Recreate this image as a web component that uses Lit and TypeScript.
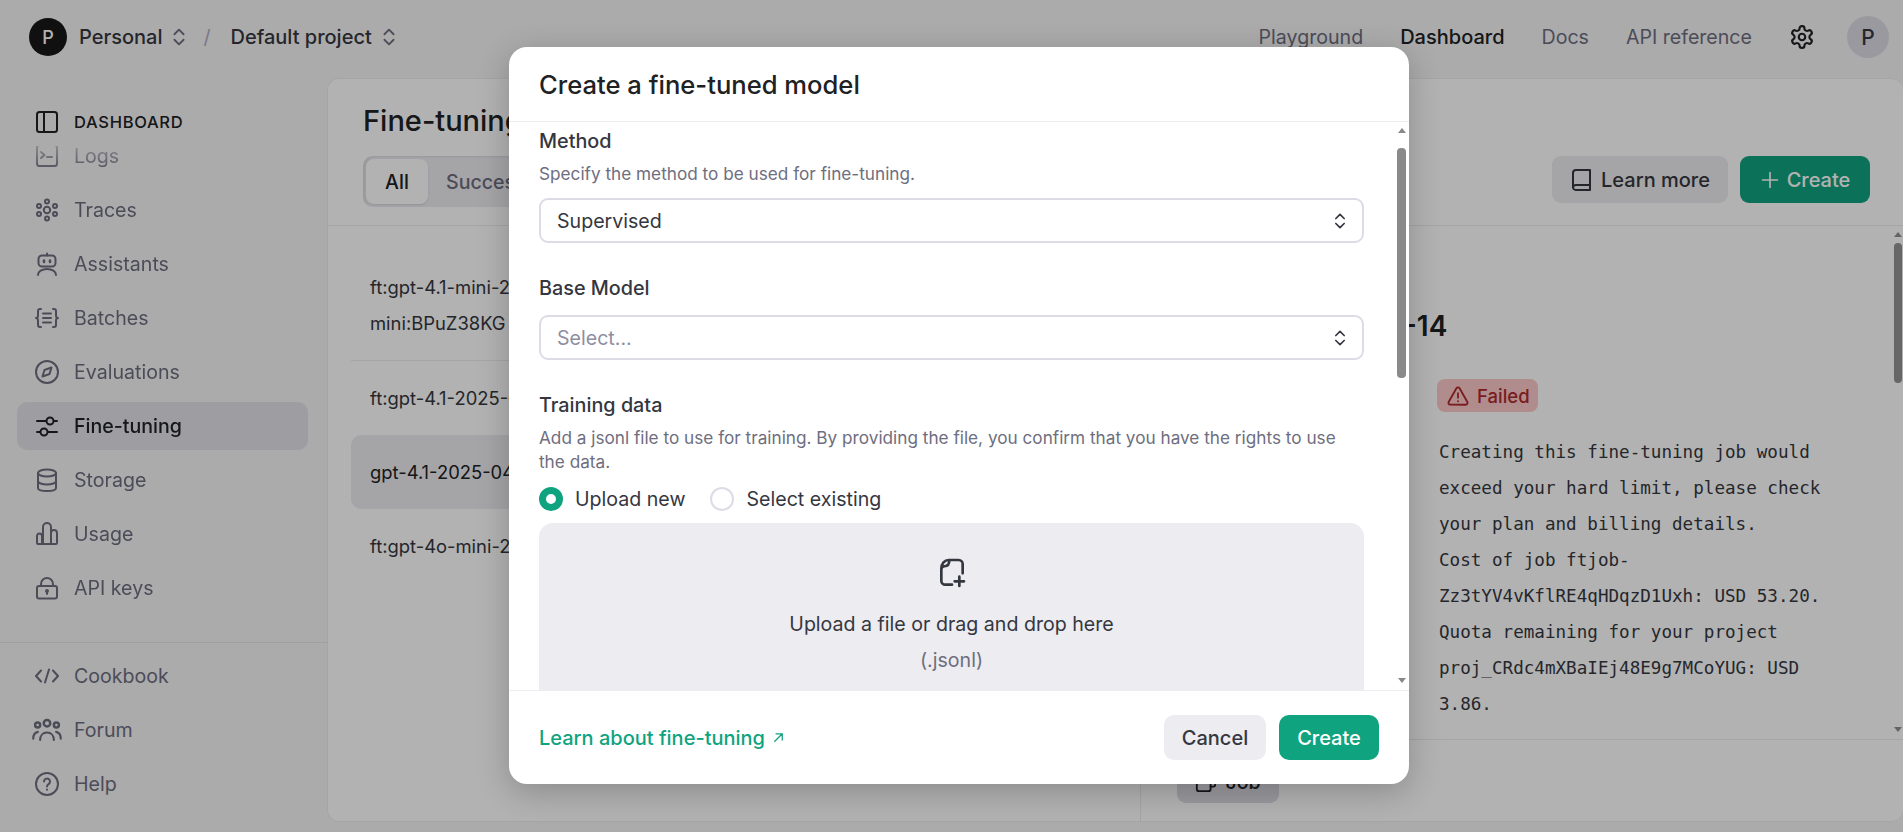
import { LitElement, html, css, svg } from "lit";
import { customElement } from "lit/decorators.js";

const ICONS: Record<string, any> = {
  panel: svg`<rect x="2" y="2" width="20" height="20" rx="2.500"/><path d="M9 2v20"/>`,
  logs: svg`<rect x="2" y="1" width="20" height="21" rx="2.500"/><path d="M6 8l3.500 3L6 14M12 13h5"/>`,
  traces: svg`<circle cx="12" cy="12" r="3.200"/><circle cx="12" cy="3.500" r="2"/><circle cx="12" cy="20.500" r="2"/><circle cx="4" cy="8" r="2"/><circle cx="20" cy="8" r="2"/><circle cx="4" cy="16" r="2"/><circle cx="20" cy="16" r="2"/>`,
  assist: svg`<rect x="3.500" y="3.500" width="17" height="11" rx="3.500"/><path d="M12 3.500V1.500M3 23c0-3.500 4-6 9-6s9 2.500 9 6"/><path d="M9 8.500v1.500M15 8.500v1.500" stroke-width="2.600"/>`,
  batch: svg`<path d="M6 3H5a2 2 0 0 0-2 2v4.500c0 1.500-1 2.500-2 2.500 1 0 2 1 2 2.500V19a2 2 0 0 0 2 2h1M18 3h1a2 2 0 0 1 2 2v4.500c0 1.500 1 2.500 2 2.500-1 0-2 1-2 2.500V19a2 2 0 0 1-2 2h-1M8 7.500h8M8 12h8M8 16.500h8"/>`,
  evals: svg`<circle cx="12" cy="12" r="11"/><path d="M16.500 7.500l-2 6.500-7 2.500 2-6.500z"/>`,
  tune: svg`<path d="M2 7h9M19 7h3M2 18h3M13 18h9"/><circle cx="15" cy="7" r="3.500"/><circle cx="9" cy="18" r="3.500"/>`,
  storage: svg`<ellipse cx="12" cy="5" rx="9" ry="3.500"/><path d="M3 5v15c0 2 4 3 9 3s9-1 9-3V5M3 13c0 2 4 3.500 9 3.500s9-1.500 9-3.500"/>`,
  usage: svg`<path d="M3 22a1 1 0 0 1-1-1v-7a2.500 2.500 0 0 1 5 0M8 22V5a3.500 3.500 0 0 1 8 0v17M3 22h18a1 1 0 0 0 1-1V11a3 3 0 0 0-6 0"/><path d="M7 14v8"/>`,
  lock: svg`<rect x="2" y="10" width="20" height="12.500" rx="2"/><path d="M6 10V8a6 6 0 0 1 12 0v2"/><circle cx="12" cy="15" r="1" fill="currentColor"/><path d="M12 15v3"/>`,
  code: svg`<path d="M6 6.500l-5 5.500 5 5.500M18 6.500l5 5.500-5 5.500M14 5.500l-4 13"/>`,
  forum: svg`<circle cx="12" cy="6.500" r="2.600"/><circle cx="4.500" cy="8" r="2"/><circle cx="19.500" cy="8" r="2"/><path d="M6.500 20c0-3.500 2.200-6 5.500-6s5.500 2.500 5.500 6M1 19c0-2.700 1.200-5 3.700-5.500M23 19c0-2.700-1.200-5-3.700-5.500" stroke-width="1.700"/>`,
  help: svg`<circle cx="12" cy="12" r="11"/><path d="M9 9.500a3 3 0 1 1 4.500 2.600c-1 .6-1.500 1.200-1.500 2.400"/><path d="M12 17.500v.3"/>`,
  gear: svg`<path d="M12.220 2h-.44a2 2 0 0 0-2 2v.18a2 2 0 0 1-1 1.730l-.43.25a2 2 0 0 1-2 0l-.15-.08a2 2 0 0 0-2.730.73l-.22.38a2 2 0 0 0 .73 2.730l.15.1a2 2 0 0 1 1 1.720v.51a2 2 0 0 1-1 1.740l-.15.09a2 2 0 0 0-.73 2.730l.22.38a2 2 0 0 0 2.730.73l.15-.08a2 2 0 0 1 2 0l.43.25a2 2 0 0 1 1 1.730V20a2 2 0 0 0 2 2h.44a2 2 0 0 0 2-2v-.18a2 2 0 0 1 1-1.730l.43-.25a2 2 0 0 1 2 0l.15.08a2 2 0 0 0 2.730-.73l.22-.39a2 2 0 0 0-.73-2.730l-.15-.08a2 2 0 0 1-1-1.740v-.5a2 2 0 0 1 1-1.740l.15-.09a2 2 0 0 0 .73-2.730l-.22-.38a2 2 0 0 0-2.730-.73l-.15.08a2 2 0 0 1-2 0l-.43-.25a2 2 0 0 1-1-1.730V4a2 2 0 0 0-2-2z"/><circle cx="12" cy="12" r="3"/>`,
  updown: svg`<path d="M7 9l5-5 5 5M7 15l5 5 5-5"/>`,
  book: svg`<path d="M20 17H6a3 3 0 0 0-3 3V5a3 3 0 0 1 3-3h14v20H6a3 3 0 0 1-3-2"/>`,
  plus: svg`<path d="M12 3v18M3 12h18"/>`,
  warn: svg`<path d="M10.300 3.500L1.800 18.500A2 2 0 0 0 3.500 21.500h17a2 2 0 0 0 1.700-3L13.700 3.500a2 2 0 0 0-3.400 0z"/><path d="M12 9v5M12 17.500v.2"/>`,
  file: svg`<path d="M12 21.500H7a3 3 0 0 1-3-3V9.500C4 5.500 6.500 3 9.500 3H17a3 3 0 0 1 3 3v7M4 10c0-1.500 1.200-2.300 2.500-2.300 2.500 0 3.500-2 3.500-4.700M17.500 15.500v7M14 19h7"/>`,
  ext: svg`<path d="M6 18L18 6M8 6h10v10"/>`,
  clone: svg`<rect x="2" y="6" width="15" height="16" rx="2.500"/><path d="M7 6V4a2 2 0 0 1 2-2h11a2 2 0 0 1 2 2v11a2 2 0 0 1-2 2h-3"/>`,
};

const icon = (name: string, cls = "") =>
  html`<svg class="ic ${cls}" viewBox="0 0 24 24" fill="none" stroke="currentColor" stroke-width="2" stroke-linecap="round" stroke-linejoin="round">${ICONS[name]}</svg>`;

const NAV: [string, string, boolean?][] = [
  ["logs", "Logs"],
  ["traces", "Traces"],
  ["assist", "Assistants"],
  ["batch", "Batches"],
  ["evals", "Evaluations"],
  ["tune", "Fine-tuning", true],
  ["storage", "Storage"],
  ["usage", "Usage"],
  ["lock", "API keys"],
];
const FOOT: [string, string][] = [
  ["code", "Cookbook"],
  ["forum", "Forum"],
  ["help", "Help"],
];

@customElement("app-root")
export class AppRoot extends LitElement {
  static styles = css`
    :host {
      display: block;
      position: relative;
      width: 1903px;
      height: 832px;
      overflow: hidden;
      font-family: Inter, "Liberation Sans", sans-serif;
      font-size: 19.6px;
      color: #202123;
      background: #f5f5f6;
    }
    * { box-sizing: border-box; }
    .ic { width: 24px; height: 24px; flex: none; display: block; }

    .page { display: grid; grid-template-rows: 78px 1fr; height: 832px; }
    .top { display: flex; align-items: center; padding: 0 14px 4px 29px; color: #353740; font-weight: 500; }
    .avatar { width: 38px; height: 38px; border-radius: 50%; background: #181818; color: #fff; display: flex; align-items: center; justify-content: center; font-size: 18px; margin-right: 12px; }
    .crumb { font-size: 20px; }
    .chev { width: 22px; height: 22px; color: #6e6e80; margin: 0 1px 0 6px; }
    .slash { color: #acacbe; margin: 0 20px 0 12px; font-weight: 400; }
    .topnav { margin-left: auto; display: flex; align-items: center; gap: 37px; color: #6e6e80; font-weight: 400; }
    .topnav .on { color: #202123; font-weight: 500; font-size: 20px; }
    .gear { width: 26px; height: 26px; color: #202123; margin-right: -5px; }
    .me { width: 42px; height: 42px; border-radius: 50%; background: #dcdce4; color: #353740; display: flex; align-items: center; justify-content: center; font-size: 21px; font-weight: 500; }

    .main { display: grid; grid-template-columns: 327px 1fr; min-height: 0; }
    .side { display: flex; flex-direction: column; min-height: 0; color: #6e6e80; }
    .side-title { display: flex; align-items: center; gap: 15px; height: 24px; margin: 32px 0 12px; padding-left: 35px; color: #202123; font-size: 16.5px; font-weight: 500; letter-spacing: 0.7px; }
    .nav { flex: 1; min-height: 0; overflow: hidden; padding: 0 19px 0 17px; -webkit-mask-image: linear-gradient(to bottom, rgba(0,0,0,0.35), #000 26px); mask-image: linear-gradient(to bottom, rgba(0,0,0,0.35), #000 26px); }
    .nav-inner { margin-top: -14px; display: flex; flex-direction: column; gap: 6px; }
    .item { display: flex; align-items: center; gap: 15px; height: 48px; padding-left: 18px; border-radius: 10px; }
    .item.on { background: #e2e2e9; color: #202123; font-weight: 500; }
    .foot { border-top: 1px solid #e3e3ea; padding: 9px 19px 24px 17px; display: flex; flex-direction: column; gap: 6px; }
    .ic-forum { width: 30px; height: 30px; margin: 0 -3px; }

    .card { background: #fff; border: 1px solid #ececf1; border-right: 0; border-radius: 12px; margin-bottom: 10px; display: flex; flex-direction: column; min-height: 0; overflow: hidden; }
    .card-head { display: flex; justify-content: space-between; align-items: flex-end; padding: 24px 33px 18px 35px; border-bottom: 1px solid #ececf1; height: 147px; flex: none; }
    .card-title { font-size: 29px; line-height: 36px; font-weight: 500; margin-bottom: 17px; }
    .tabs { display: inline-flex; height: 51px; padding: 3px; border-radius: 10px; background: #ececf1; box-shadow: inset 2px 1px 2px rgba(0,0,0,0.08); color: #6e6e80; font-weight: 500; width: 360px; }
    .tab { display: flex; align-items: center; justify-content: center; padding: 0 18px; border-radius: 8px; height: 45px; }
    .tab.on { background: #fff; color: #202123; box-shadow: 0 1px 2px rgba(0,0,0,0.1); width: 62px; padding: 0; }
    .actions { display: flex; gap: 12px; margin-bottom: 4px; }
    .btn { display: flex; align-items: center; justify-content: center; gap: 7px; height: 47px; border-radius: 9px; font-weight: 500; font-size: 20px; }
    .btn.soft { background: #ececf1; color: #353740; width: 176px; }
    .btn.green { background: #10a37f; color: #fff; width: 130px; }
    .btn .ic { width: 20px; height: 20px; }
    .btn.soft .ic { width: 24px; height: 24px; }

    .split { flex: 1; min-height: 0; display: grid; grid-template-columns: 813px 1fr; }
    .list { border-right: 1px solid #ececf1; padding: 24px 24px 0 23px; }
    .row { padding: 19px; line-height: 36px; font-size: 18.4px; color: #353740; white-space: nowrap; overflow: hidden; }
    .row.div { border-bottom: 1px solid #ececf1; }
    .row.sel { background: #ececf1; border-radius: 10px; color: #202123; height: 74px; }

    .detail { display: flex; flex-direction: column; min-height: 0; position: relative; }
    .scroll { flex: 1; min-height: 0; overflow: hidden; padding: 82px 0 0 36px; }
    .name { font-size: 28px; line-height: 36px; font-weight: 600; color: #202123; white-space: nowrap; }
    .status { margin: 35px 0 0 260px; }
    .badge { display: inline-flex; align-items: center; gap: 8px; height: 33px; width: 101px; padding-left: 10px; border-radius: 8px; background: #fdc9c9; color: #ae2a2d; font-weight: 500; font-size: 18.5px; }
    .badge .ic { width: 22px; height: 22px; }
    .mono { margin: 22px 0 0 262px; width: 400px; font-family: "DejaVu Sans Mono", "Liberation Mono", monospace; font-size: 17.6px; line-height: 36px; color: #353740; }
    .detail-foot { flex: none; height: 82px; border-top: 1px solid #ececf1; padding: 21px 0 0 36px; }
    .job { display: flex; align-items: center; justify-content: center; gap: 8px; width: 102px; height: 42px; border-radius: 9px; background: #dcdce4; color: #202123; font-weight: 500; }
    .job .ic { width: 22px; height: 22px; }

    .sb { position: absolute; }
    .thumb { position: absolute; border-radius: 4px; }
    .arrow { position: absolute; width: 0; height: 0; border-left: 4.500px solid transparent; border-right: 4.500px solid transparent; }
    .arrow.up { border-bottom: 5px solid var(--c); }
    .arrow.down { border-top: 5px solid var(--c); }
    .sb.page-sb { --c: #909090; top: 0; bottom: 82px; right: 0; width: 10px; }
    .sb.page-sb .thumb { background: #929292; left: 1px; width: 8px; top: 17px; height: 140px; }
    .sb.page-sb .arrow.up { top: 6px; left: 1px; }
    .sb.page-sb .arrow.down { bottom: 7px; left: 1px; }

    .overlay { position: absolute; inset: 0; background: rgba(0,0,0,0.3); }
    .modal { position: absolute; left: 509px; top: 47px; width: 900px; height: 737px; background: #fff; border-radius: 18px; display: flex; flex-direction: column; overflow: hidden; box-shadow: 0 8px 32px rgba(0,0,0,0.22); }
    .m-head { flex: none; height: 75px; display: flex; align-items: center; padding: 0 30px; border-bottom: 1px solid #ececf1; font-size: 25.6px; font-weight: 500; color: #202123; }
    .m-body { flex: 1; min-height: 0; overflow: hidden; position: relative; padding: 7px 45px 0 30px; }
    .sb.modal-sb { --c: #888; top: 0; bottom: 0; right: 0; width: 13px; }
    .sb.modal-sb .thumb { background: #8a8a8a; right: 3px; width: 9px; top: 26px; height: 230px; }
    .sb.modal-sb .arrow.up { top: 6px; right: 3px; }
    .sb.modal-sb .arrow.down { bottom: 7px; right: 3px; }
    .lab { font-size: 19.8px; line-height: 24px; font-weight: 500; color: #353740; }
    .help { font-size: 17.2px; line-height: 24px; color: #6e6e80; margin-top: 9px; }
    .sel-box { height: 45px; border: 2px solid #dcdce6; border-radius: 9px; display: flex; align-items: center; justify-content: space-between; padding: 0 12px 0 16px; color: #353740; }
    .sel-box .ic { width: 20px; height: 20px; color: #353740; }
    .sel-box.ph { color: #8e8ea0; }
    .sec { margin-top: 33px; }
    .gap-12 { margin-top: 12px; }
    .gap-15 { margin-top: 15px; }
    .radios { display: flex; align-items: center; height: 24px; margin-top: 13px; gap: 12px; color: #353740; }
    .radio { width: 24px; height: 24px; border-radius: 50%; border: 2px solid #dcdce6; flex: none; }
    .radio.on { border: 7px solid #10a37f; background: #fff; }
    .radio-2 { margin-left: 13px; }
    .upload { margin-top: 12px; height: 300px; border-radius: 14px; background: #ececf1; display: flex; flex-direction: column; align-items: center; padding-top: 33px; color: #353740; }
    .upload .ic { width: 32px; height: 32px; }
    .up-text { margin-top: 18px; line-height: 36px; }
    .up-sub { color: #6e6e80; line-height: 36px; }
    .m-foot { flex: none; height: 94px; border-top: 1px solid #ececf1; display: flex; align-items: center; justify-content: space-between; padding: 0 30px; }
    .learn { display: flex; align-items: center; gap: 6px; color: #10a37f; font-weight: 500; font-size: 20px; }
    .learn .ic { width: 15px; height: 15px; }
    .m-btns { display: flex; gap: 13px; }
    .m-btn { height: 45px; display: flex; align-items: center; justify-content: center; border-radius: 10px; font-weight: 500; font-size: 20px; }
    .m-btn.c { width: 102px; background: #ececf1; color: #353740; }
    .m-btn.g { width: 100px; background: #10a37f; color: #fff; }
  `;

  private navItem(i: [string, string, boolean?]) {
    return html`<div class="item ${i[2] ? "on" : ""}">${icon(i[0], `ic-${i[0]}`)}<span>${i[1]}</span></div>`;
  }

  render() {
    return html`
      <div class="page">
        <header class="top">
          <div class="avatar">P</div>
          <span class="crumb">Personal</span>${icon("updown", "chev")}
          <span class="slash">/</span>
          <span class="crumb">Default project</span>${icon("updown", "chev")}
          <nav class="topnav">
            <span>Playground</span>
            <span class="on">Dashboard</span>
            <span>Docs</span>
            <span>API reference</span>
            ${icon("gear", "gear")}
            <div class="me">P</div>
          </nav>
        </header>
        <div class="main">
          <aside class="side">
            <div class="side-title">${icon("panel")}<span>DASHBOARD</span></div>
            <div class="nav"><div class="nav-inner">${NAV.map((n) => this.navItem(n))}</div></div>
            <div class="foot">${FOOT.map((n) => this.navItem(n))}</div>
          </aside>
          <section class="card">
            <div class="card-head">
              <div>
                <div class="card-title">Fine-tuning</div>
                <div class="tabs">
                  <div class="tab on">All</div>
                  <div class="tab">Successful</div>
                  <div class="tab">Failed</div>
                </div>
              </div>
              <div class="actions">
                <div class="btn soft">${icon("book")}Learn more</div>
                <div class="btn green">${icon("plus")}Create</div>
              </div>
            </div>
            <div class="split">
              <div class="list">
                <div class="row div">ft:gpt-4.1-mini-2025-04-14:personal:gpt-4-1-<br />mini:BPuZ38KG</div>
                <div class="row">ft:gpt-4.1-2025-04-14:personal::BPuX12QA</div>
                <div class="row sel">gpt-4.1-2025-04-14</div>
                <div class="row">ft:gpt-4o-mini-2024-07-18:personal::BNaT47RK</div>
              </div>
              <div class="detail">
                <div class="scroll">
                  <div class="name">gpt-4.1-2025-04-14</div>
                  <div class="status"><span class="badge">${icon("warn")}Failed</span></div>
                  <div class="mono">Creating this fine-tuning job would exceed your hard limit, please check your plan and billing details.<br />Cost of job ftjob-Zz3tYV4vKflRE4qHDqzD1Uxh: USD 53.20.<br />Quota remaining for your project proj_CRdc4mXBaIEj48E9g7MCoYUG: USD 3.86.</div>
                </div>
                <div class="detail-foot"><div class="job">${icon("clone")}Job</div></div>
                <div class="sb page-sb"><div class="arrow up"></div><div class="thumb"></div><div class="arrow down"></div></div>
              </div>
            </div>
          </section>
        </div>
      </div>
      <div class="overlay"></div>
      <div class="modal">
        <div class="m-head">Create a fine-tuned model</div>
        <div class="m-body">
          <div class="lab">Method</div>
          <div class="help">Specify the method to be used for fine-tuning.</div>
          <div class="sel-box gap-12"><span>Supervised</span>${icon("updown")}</div>
          <div class="lab sec">Base Model</div>
          <div class="sel-box ph gap-15"><span>Select...</span>${icon("updown")}</div>
          <div class="lab sec">Training data</div>
          <div class="help">Add a jsonl file to use for training. By providing the file, you confirm that you have the rights to use the data.</div>
          <div class="radios">
            <div class="radio on"></div><span>Upload new</span>
            <div class="radio radio-2"></div><span>Select existing</span>
          </div>
          <div class="upload">
            ${icon("file")}
            <div class="up-text">Upload a file or drag and drop here</div>
            <div class="up-sub">(.jsonl)</div>
          </div>
          <div class="sb modal-sb"><div class="arrow up"></div><div class="thumb"></div><div class="arrow down"></div></div>
        </div>
        <div class="m-foot">
          <div class="learn">Learn about fine-tuning ${icon("ext")}</div>
          <div class="m-btns"><div class="m-btn c">Cancel</div><div class="m-btn g">Create</div></div>
        </div>
      </div>
    `;
  }
}
